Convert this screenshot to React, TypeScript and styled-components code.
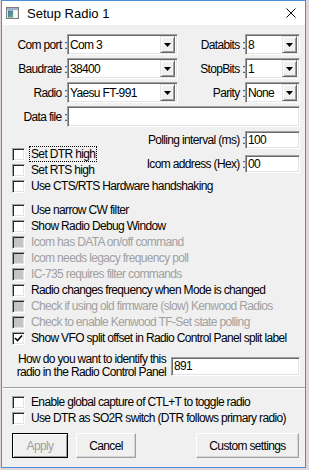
import React from "react";
import styled, { createGlobalStyle, css } from "styled-components";

const GlobalStyle = createGlobalStyle`
  html, body { margin: 0; padding: 0; }
  body {
    background: #e2d5d9;
    font-family: "Liberation Sans", Arial, sans-serif;
    font-size: 12px;
    color: #000;
  }
`;

const Window = styled.div`
  box-sizing: border-box;
  margin-left: 1px;
  width: 305px;
  height: 468px;
  border: 1px solid #4a90d9;
  background: #f0f0f0;
  display: flex;
  flex-direction: column;
`;

const TitleBar = styled.div`
  height: 24px;
  background: #fff;
  display: flex;
  align-items: center;
  padding-left: 4px;
  padding-right: 9px;
`;

const TitleText = styled.div`
  margin-left: 8px;
  font-size: 13px;
  flex: 1;
`;

const Body = styled.div`
  display: flex;
  flex-direction: column;
  padding: 9px 5px 0 10px;
  letter-spacing: -0.65px;
`;

const sunken = css`
  box-sizing: border-box;
  background: #fff;
  border: 1px solid;
  border-color: #a0a0a0 #fff #fff #a0a0a0;
  box-shadow: inset 1px 1px 0 #696969, inset -1px -1px 0 #e3e3e3;
`;

const FieldRow = styled.div<{ $mb?: number }>`
  display: flex;
  align-items: center;
  height: 21px;
  margin-bottom: ${(p) => p.$mb ?? 3}px;
`;

const Label = styled.div<{ $w?: number }>`
  ${(p) => (p.$w ? `width: ${p.$w}px;` : "flex: 1;")}
  text-align: right;
  white-space: nowrap;
`;

const Combo = styled.div<{ $w: number }>`
  ${sunken};
  width: ${(p) => p.$w}px;
  height: 21px;
  padding: 2px;
  display: flex;
  align-items: center;
`;

const ComboText = styled.div`
  flex: 1;
  white-space: nowrap;
  overflow: hidden;
`;

const DropButton = styled.div`
  box-sizing: border-box;
  width: 15px;
  height: 17px;
  background: #f0f0f0;
  border: 1px solid;
  border-color: #e3e3e3 #696969 #696969 #e3e3e3;
  box-shadow: inset 1px 1px 0 #fff, inset -1px -1px 0 #a0a0a0;
  display: flex;
  align-items: center;
  justify-content: center;
`;

const TextBox = styled.div<{ $w?: number; $h?: number }>`
  ${sunken};
  ${(p) => (p.$w ? `width: ${p.$w}px;` : "flex: 1;")}
  height: ${(p) => p.$h ?? 21}px;
  padding: 0 2px;
  display: flex;
  align-items: center;
  white-space: nowrap;
`;

const SplitSection = styled.div`
  display: grid;
  grid-template-columns: 1fr auto;
  margin-top: 1px;
`;

const CheckStack = styled.div<{ $pt?: number; $mt?: number }>`
  display: flex;
  flex-direction: column;
  padding-top: ${(p) => p.$pt ?? 0}px;
  margin-top: ${(p) => p.$mt ?? 0}px;
`;

const FieldStack = styled.div`
  display: flex;
  flex-direction: column;
  gap: 6px;
`;

const SmallField = styled.div`
  display: flex;
  align-items: center;
  height: 18px;
`;

const SpanAll = styled.div`
  grid-column: 1 / -1;
`;

const CheckRow = styled.div<{ $disabled?: boolean }>`
  display: flex;
  align-items: center;
  height: 16px;
  white-space: nowrap;
  color: ${(p) => (p.$disabled ? "#a0a0a0" : "#000")};
`;

const Box = styled.span<{ $disabled?: boolean }>`
  box-sizing: border-box;
  width: 13px;
  height: 13px;
  flex: none;
  margin-right: 6px;
  border: 1px solid;
  border-color: #a0a0a0 #fff #fff #a0a0a0;
  box-shadow: inset 1px 1px 0 #2a2a2a, inset -1px -1px 0 #e3e3e3;
  background: ${(p) => (p.$disabled ? "#c4c4c4" : "#fff")};
  display: flex;
  align-items: center;
  justify-content: center;
`;

const FocusText = styled.span`
  outline: 1px dotted #000;
  padding: 0 1px;
  margin-left: -1px;
`;

const IdentifyRow = styled.div`
  display: flex;
  align-items: center;
  margin-top: 7px;
`;

const IdentifyLabel = styled.div`
  width: 154px;
  text-align: right;
  line-height: 13px;
  margin-right: 5px;
  white-space: nowrap;
`;

const Separator = styled.div`
  margin: 8px -5px 0 -9px;
  border-top: 1px solid #a0a0a0;
  border-bottom: 1px solid #fff;
`;

const ButtonRow = styled.div`
  display: flex;
  margin-top: 7px;
  padding-right: 1px;
`;

const Button = styled.div<{ $w: number; $ml?: string; $disabled?: boolean }>`
  box-sizing: border-box;
  width: ${(p) => p.$w}px;
  height: 25px;
  margin-left: ${(p) => p.$ml ?? "0"};
  display: flex;
  align-items: center;
  justify-content: center;
  background: #f0f0f0;
  color: ${(p) => (p.$disabled ? "#a0a0a0" : "#000")};
  border: 1px solid;
  border-color: ${(p) =>
    p.$disabled ? "#000" : "#fff #a0a0a0 #a0a0a0 #fff"};
  box-shadow: ${(p) =>
    p.$disabled
      ? "inset 1px 1px 0 #fff, inset -1px -1px 0 #a0a0a0"
      : "inset -1px -1px 0 #d6d6d6"};
`;

const Arrow = () => (
  <svg width="7" height="4" viewBox="0 0 7 4">
    <polygon points="0,0 7,0 3.5,4" fill="#000" />
  </svg>
);

const AppIcon = () => (
  <svg width="13" height="12" viewBox="0 0 13 12">
    <defs>
      <linearGradient id="g" x1="0" y1="0" x2="1" y2="1">
        <stop offset="0" stopColor="#3d74b0" />
        <stop offset="1" stopColor="#6fb07a" />
      </linearGradient>
    </defs>
    <rect x="0.5" y="0.5" width="12" height="11" fill="#e8e8e8" stroke="#7d7d7d" />
    <rect x="1" y="1" width="11" height="2" fill="#9bb3cc" />
    <rect x="2" y="3.5" width="5" height="7" fill="url(#g)" />
    <rect x="8" y="3.5" width="3" height="7" fill="#fafafa" />
  </svg>
);

const CloseIcon = () => (
  <svg width="10" height="10" viewBox="0 0 10 10">
    <path d="M0.5 0.5 L9.5 9.5 M9.5 0.5 L0.5 9.5" stroke="#000" strokeWidth="1" />
  </svg>
);

const CheckMark = () => (
  <svg width="9" height="9" viewBox="0 0 9 9">
    <path d="M1 4 L3.5 6.5 L8 1.5" stroke="#000" strokeWidth="1.6" fill="none" />
  </svg>
);

type CheckProps = {
  label: string;
  disabled?: boolean;
  checked?: boolean;
  focused?: boolean;
};

const Check = ({ label, disabled, checked, focused }: CheckProps) => (
  <CheckRow $disabled={disabled}>
    <Box $disabled={disabled}>{checked && <CheckMark />}</Box>
    {focused ? <FocusText>{label}</FocusText> : <span>{label}</span>}
  </CheckRow>
);

const ComboBox = ({ w, value }: { w: number; value: string }) => (
  <Combo $w={w}>
    <ComboText>{value}</ComboText>
    <DropButton>
      <Arrow />
    </DropButton>
  </Combo>
);

const options: CheckProps[] = [
  { label: "Use narrow CW filter" },
  { label: "Show Radio Debug Window" },
  { label: "Icom has DATA on/off command", disabled: true },
  { label: "Icom needs legacy frequency poll", disabled: true },
  { label: "IC-735 requires filter commands", disabled: true },
  { label: "Radio changes frequency when Mode is changed" },
  { label: "Check if using old firmware (slow) Kenwood Radios", disabled: true },
  { label: "Check to enable Kenwood TF-Set state polling", disabled: true },
  { label: "Show VFO split offset in Radio Control Panel split label", checked: true },
];

export default function App() {
  return (
    <>
      <GlobalStyle />
      <Window>
        <TitleBar>
          <AppIcon />
          <TitleText>Setup Radio 1</TitleText>
          <CloseIcon />
        </TitleBar>
        <Body>
          <FieldRow>
            <Label $w={55}>Com port :</Label>
            <ComboBox w={111} value="Com 3" />
            <Label>Databits :</Label>
            <ComboBox w={55} value="8" />
          </FieldRow>
          <FieldRow>
            <Label $w={55}>Baudrate :</Label>
            <ComboBox w={111} value="38400" />
            <Label>StopBits :</Label>
            <ComboBox w={55} value="1" />
          </FieldRow>
          <FieldRow>
            <Label $w={55}>Radio :</Label>
            <ComboBox w={111} value="Yaesu FT-991" />
            <Label>Parity :</Label>
            <ComboBox w={55} value="None" />
          </FieldRow>
          <FieldRow $mb={3}>
            <Label $w={55}>Data file :</Label>
            <TextBox />
          </FieldRow>
          <SplitSection>
            <CheckStack $pt={15}>
              <Check label="Set DTR high" focused />
              <Check label="Set RTS high" />
            </CheckStack>
            <FieldStack>
              <SmallField>
                <Label>Polling interval (ms) :</Label>
                <TextBox $w={55} $h={18}>100</TextBox>
              </SmallField>
              <SmallField>
                <Label>Icom address (Hex) :</Label>
                <TextBox $w={55} $h={18}>00</TextBox>
              </SmallField>
            </FieldStack>
            <SpanAll>
              <Check label="Use CTS/RTS Hardware handshaking" />
            </SpanAll>
          </SplitSection>
          <CheckStack $mt={8}>
            {options.map((o) => (
              <Check key={o.label} {...o} />
            ))}
          </CheckStack>
          <IdentifyRow>
            <IdentifyLabel>
              How do you want to identify this
              <br />
              radio in the Radio Control Panel
            </IdentifyLabel>
            <TextBox $h={19}>891</TextBox>
          </IdentifyRow>
          <Separator />
          <CheckStack $mt={5}>
            <Check label="Enable global capture of CTL+T to toggle radio" />
            <Check label="Use DTR as SO2R switch (DTR follows primary radio)" />
          </CheckStack>
          <ButtonRow>
            <Button $w={56} $disabled>Apply</Button>
            <Button $w={60} $ml="8px">Cancel</Button>
            <Button $w={103} $ml="auto">Custom settings</Button>
          </ButtonRow>
        </Body>
      </Window>
    </>
  );
}
